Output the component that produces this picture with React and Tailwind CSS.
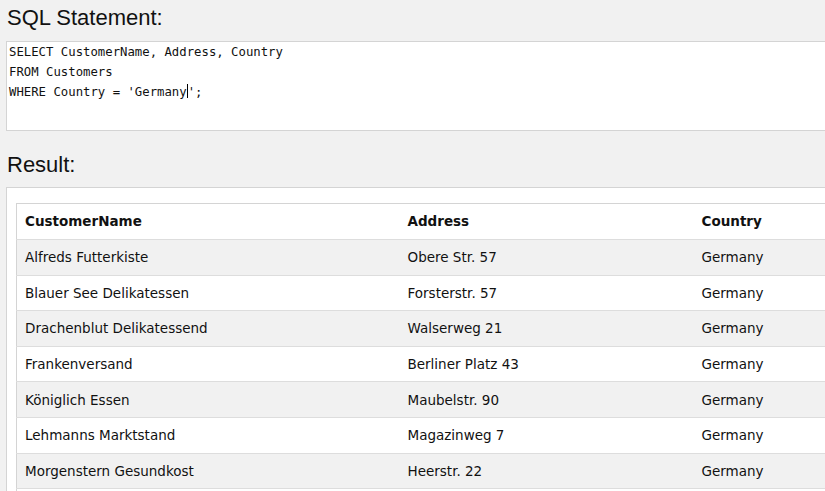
import React from "react";

const customers = [
  ["Alfreds Futterkiste", "Obere Str. 57", "Germany"],
  ["Blauer See Delikatessen", "Forsterstr. 57", "Germany"],
  ["Drachenblut Delikatessend", "Walserweg 21", "Germany"],
  ["Frankenversand", "Berliner Platz 43", "Germany"],
  ["Königlich Essen", "Maubelstr. 90", "Germany"],
  ["Lehmanns Marktstand", "Magazinweg 7", "Germany"],
  ["Morgenstern Gesundkost", "Heerstr. 22", "Germany"],
  ["", "", ""],
];

export default function App() {
  return (
    <div className="w-[825px] h-[491px] overflow-hidden bg-[#f1f1f1] font-['Liberation_Sans',Arial,sans-serif]">
      <h2 className="pl-[7px] pt-[5px] text-[22px] leading-[25px] text-[#111]">SQL Statement:</h2>

      <div className="ml-[6px] mt-[11px] w-[900px] h-[90px] bg-white border border-[#d4d4d4] pl-[2px] font-['DejaVu_Sans_Mono',monospace] text-[12.3px] leading-[20px] text-[#111]">
        <div>SELECT CustomerName, Address, Country</div>
        <div>FROM Customers</div>
        <div>
          WHERE Country = 'Germany<span className="inline-block w-px h-[14px] bg-black align-[-2px]"></span>';
        </div>
      </div>

      <h2 className="pl-[7px] mt-[21px] text-[22px] leading-[25px] text-[#111]">Result:</h2>

      <div className="ml-[6px] mt-[10px] w-[900px] bg-white border border-[#d4d4d4] pt-[15px] pl-[9px]">
        <table className="w-[880px] border border-[#d4d4d4] border-collapse font-['DejaVu_Sans',Verdana,sans-serif] text-[13.5px] text-[#111]">
          <thead>
            <tr className="h-[36px]">
              <th className="w-[383px] pl-[8px] text-left font-bold">CustomerName</th>
              <th className="w-[294px] pl-[8px] text-left font-bold">Address</th>
              <th className="pl-[8px] text-left font-bold">Country</th>
            </tr>
          </thead>
          <tbody>
            {customers.map((c, i) => (
              <tr key={i} className={`h-[35.6px] border-t border-[#dddddd] ${i % 2 === 0 ? "bg-[#f1f1f1]" : "bg-white"}`}>
                <td className="pl-[8px]">{c[0]}</td>
                <td className="pl-[8px]">{c[1]}</td>
                <td className="pl-[8px]">{c[2]}</td>
              </tr>
            ))}
          </tbody>
        </table>
      </div>
    </div>
  );
}
